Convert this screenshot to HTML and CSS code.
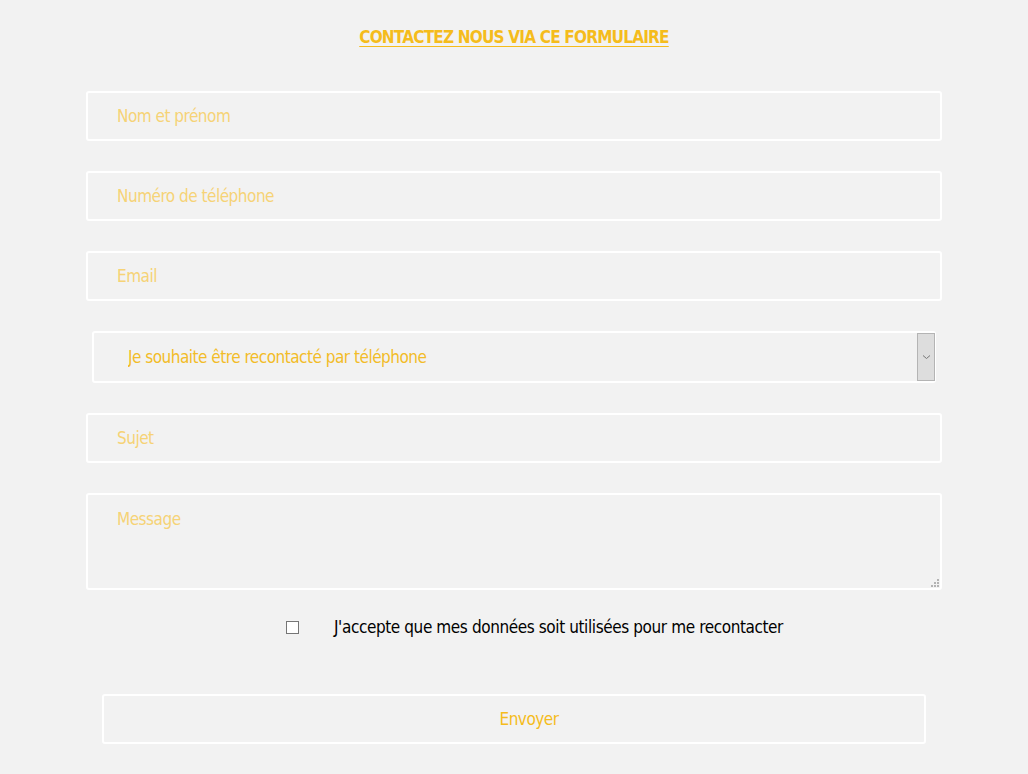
FILE: index.html
```html
<!DOCTYPE html>
<html lang="fr">
<head>
<meta charset="utf-8">
<title>Contact</title>
<link rel="stylesheet" href="styles.css">
</head>
<body>
<main class="page">
  <h1 class="title">CONTACTEZ NOUS VIA CE FORMULAIRE</h1>
  <form class="form">
    <input class="field" type="text" placeholder="Nom et prénom">
    <input class="field" type="text" placeholder="Numéro de téléphone">
    <input class="field" type="text" placeholder="Email">
    <div class="select-wrap">
      <select class="select">
        <option>Je souhaite être recontacté par téléphone</option>
      </select>
      <span class="select-arrow"><svg width="9" height="6" viewBox="0 0 9 6"><path d="M1 1.5 L4.5 4.5 L8 1.5" fill="none" stroke="#777" stroke-width="1"/></svg></span>
    </div>
    <input class="field" type="text" placeholder="Sujet">
    <div class="area-wrap">
      <textarea class="field area" placeholder="Message"></textarea>
      <svg class="grip" width="9" height="9" viewBox="0 0 9 9"><g fill="#b3b3b3"><rect x="7" y="1" width="2" height="2"/><rect x="4" y="4" width="2" height="2"/><rect x="7" y="4" width="2" height="2"/><rect x="1" y="7" width="2" height="2"/><rect x="4" y="7" width="2" height="2"/><rect x="7" y="7" width="2" height="2"/></g></svg>
    </div>
    <label class="consent">
      <input class="check" type="checkbox">
      <span class="consent-text">J'accepte que mes données soit utilisées pour me recontacter</span>
    </label>
    <button class="send" type="button">Envoyer</button>
  </form>
</main>
</body>
</html>
```
FILE: styles.css
```css
* { box-sizing: border-box; }
html, body {
  margin: 0;
  background: #f2f2f2;
}
body {
  font-family: "DejaVu Sans Condensed", "DejaVu Sans", sans-serif;
  font-stretch: condensed;
}
.page {
  width: 856px;
  margin: 0 auto;
  padding-top: 22px;
}
.title {
  margin: 0 0 39px;
  text-align: center;
  font-size: 17px;
  line-height: 30px;
  font-weight: bold;
  letter-spacing: -0.8px;
  color: #f5bc1c;
  text-decoration: underline;
  text-decoration-thickness: 1px;
  text-underline-offset: 3px;
}
.form {
  display: flex;
  flex-direction: column;
}
.field {
  display: block;
  width: 100%;
  height: 50px;
  margin: 0 0 30px;
  padding: 0 0 0 29px;
  border: 2px solid #ffffff;
  border-radius: 3px;
  background: #f2f2f2;
  font-family: inherit;
  font-stretch: condensed;
  font-size: 17px;
  letter-spacing: -0.5px;
  color: #f2bc28;
  outline: none;
}
.field::placeholder {
  color: #f6d376;
  opacity: 1;
}
.area-wrap {
  position: relative;
  height: 97px;
}
.area {
  height: 97px;
  margin-bottom: 0;
  padding-top: 10px;
  line-height: 28px;
  resize: none;
}
.grip {
  position: absolute;
  right: 3px;
  bottom: 3px;
}
.select-wrap {
  position: relative;
  margin: 0 6px 30px;
  height: 52px;
}
.select {
  display: block;
  width: 100%;
  height: 52px;
  padding: 0 0 0 34px;
  border: 2px solid #ffffff;
  border-radius: 3px;
  background: #f2f2f2;
  font-family: inherit;
  font-stretch: condensed;
  font-size: 17px;
  letter-spacing: -0.5px;
  color: #f2bc28;
  appearance: none;
  -webkit-appearance: none;
  outline: none;
}
.select-arrow {
  position: absolute;
  top: 2px;
  right: 1px;
  width: 18px;
  height: 48px;
  background: #dddddd;
  border: 1px solid #b4b4b4;
  display: flex;
  align-items: center;
  justify-content: center;
  pointer-events: none;
}
.consent {
  display: flex;
  align-items: center;
  height: 76px;
  padding-left: 200px;
  padding-bottom: 2px;
  font-size: 17px;
  letter-spacing: -0.4px;
  color: #000000;
  white-space: nowrap;
}
.check {
  appearance: none;
  -webkit-appearance: none;
  width: 13px;
  height: 13px;
  margin: 0 35px 0 0;
  border: 1px solid #767676;
  background: #ffffff;
  border-radius: 0;
}
.send {
  display: block;
  margin: 28px 16px 0 16px;
  height: 50px;
  padding: 0 0 0 30px;
  border: 2px solid #ffffff;
  border-radius: 3px;
  background: #f2f2f2;
  font-family: inherit;
  font-stretch: condensed;
  font-size: 17px;
  letter-spacing: -0.5px;
  color: #f5bc1c;
  text-align: center;
}
```
